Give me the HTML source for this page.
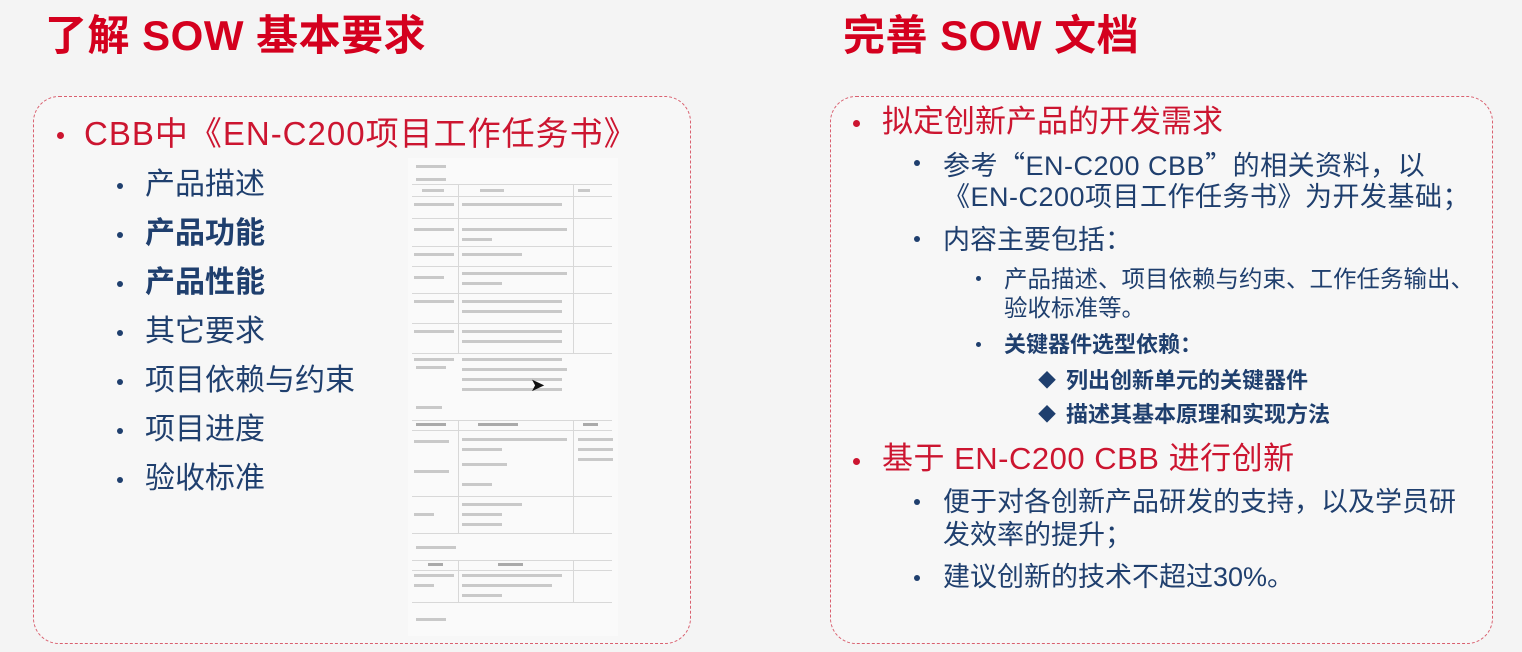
<!DOCTYPE html>
<html><head><meta charset="utf-8">
<style>
html,body{margin:0;padding:0}
body{width:1522px;height:652px;background:#f4f4f4;position:relative;overflow:hidden;font-family:"Liberation Sans","Noto Sans CJK SC",sans-serif}
.a{position:absolute;white-space:nowrap}
.t{font-size:42px;font-weight:bold;color:#d4001e;line-height:42px}
.box{position:absolute;border:1.5px dashed #d9606f;border-radius:26px;background:#f7f7f7}
.r{color:#cc1530}
.b{color:#1f3f6e}
.bold{font-weight:bold}
.q{font-family:"Noto Sans CJK SC",sans-serif}
.dot{position:absolute;border-radius:50%}
.doc{position:absolute;left:408px;top:158px;width:210px;height:478px;background:#fafafa}
.doc div{position:absolute;background:#d8d8d8}
.doc span{position:absolute;height:3px;background:#c9c9c9}
</style></head><body>
<div class="a t" style="left:45px;top:15px;letter-spacing:0.5px">了解 SOW 基本要求</div>
<div class="a t" style="left:843px;top:15px;letter-spacing:0.5px">完善 SOW 文档</div>

<div class="box" style="left:33px;top:96px;width:656px;height:546px"></div>
<div class="box" style="left:830px;top:96px;width:661px;height:546px"></div>

<!-- left -->
<div class="dot" style="left:57px;top:132px;width:7px;height:7px;background:#cc1530"></div>
<div class="a r" style="left:84px;top:116px;font-size:33px;line-height:36px;letter-spacing:1px">CBB中《EN-C200项目工作任务书》</div>

<div class="a b" style="left:145px;top:169px;font-size:30px;line-height:32px">产品描述</div>
<div class="a b bold" style="left:145px;top:218px;font-size:30px;line-height:32px">产品功能</div>
<div class="a b bold" style="left:145px;top:267px;font-size:30px;line-height:32px">产品性能</div>
<div class="a b" style="left:145px;top:316px;font-size:30px;line-height:32px">其它要求</div>
<div class="a b" style="left:145px;top:365px;font-size:30px;line-height:32px">项目依赖与约束</div>
<div class="a b" style="left:145px;top:414px;font-size:30px;line-height:32px">项目进度</div>
<div class="a b" style="left:145px;top:463px;font-size:30px;line-height:32px">验收标准</div>
<div class="dot" style="left:117px;top:183px;width:6px;height:6px;background:#1f3f6e"></div>
<div class="dot" style="left:117px;top:232px;width:6px;height:6px;background:#1f3f6e"></div>
<div class="dot" style="left:117px;top:281px;width:6px;height:6px;background:#1f3f6e"></div>
<div class="dot" style="left:117px;top:330px;width:6px;height:6px;background:#1f3f6e"></div>
<div class="dot" style="left:117px;top:379px;width:6px;height:6px;background:#1f3f6e"></div>
<div class="dot" style="left:117px;top:428px;width:6px;height:6px;background:#1f3f6e"></div>
<div class="dot" style="left:117px;top:477px;width:6px;height:6px;background:#1f3f6e"></div>

<div class="doc">
<span style="left:8px;top:7px;width:30px"></span>
<span style="left:8px;top:20px;width:30px"></span>
<div style="left:4px;top:26px;width:200px;height:1px"></div>
<span style="left:14px;top:31px;width:22px"></span><span style="left:72px;top:31px;width:24px"></span><span style="left:170px;top:31px;width:12px"></span>
<div style="left:4px;top:38px;width:200px;height:1px"></div>
<div style="left:4px;top:60px;width:200px;height:1px"></div>
<div style="left:4px;top:88px;width:200px;height:1px"></div>
<div style="left:4px;top:108px;width:200px;height:1px"></div>
<div style="left:4px;top:135px;width:200px;height:1px"></div>
<div style="left:4px;top:165px;width:200px;height:1px"></div>
<div style="left:4px;top:195px;width:200px;height:1px"></div>
<div style="left:50px;top:26px;width:1px;height:170px"></div>
<div style="left:165px;top:26px;width:1px;height:170px"></div>
<span style="left:6px;top:45px;width:40px"></span><span style="left:54px;top:45px;width:100px"></span>
<span style="left:6px;top:70px;width:40px"></span><span style="left:54px;top:70px;width:105px"></span><span style="left:54px;top:80px;width:30px"></span>
<span style="left:6px;top:95px;width:40px"></span><span style="left:54px;top:95px;width:60px"></span>
<span style="left:6px;top:118px;width:30px"></span><span style="left:54px;top:114px;width:105px"></span><span style="left:54px;top:124px;width:40px"></span>
<span style="left:6px;top:142px;width:40px"></span><span style="left:54px;top:142px;width:100px"></span><span style="left:54px;top:152px;width:100px"></span>
<span style="left:6px;top:172px;width:40px"></span><span style="left:54px;top:172px;width:100px"></span><span style="left:54px;top:182px;width:100px"></span>
<span style="left:6px;top:200px;width:40px"></span><span style="left:54px;top:200px;width:100px"></span><span style="left:54px;top:210px;width:105px"></span><span style="left:54px;top:220px;width:100px"></span>
<span style="left:8px;top:208px;width:30px"></span><span style="left:54px;top:230px;width:100px"></span>
<span style="left:8px;top:248px;width:26px"></span>
<div style="left:4px;top:262px;width:200px;height:1px"></div>
<span style="left:8px;top:265px;width:30px;background:#aaa"></span><span style="left:70px;top:265px;width:40px;background:#aaa"></span><span style="left:175px;top:265px;width:15px;background:#aaa"></span>
<div style="left:4px;top:272px;width:200px;height:1px"></div>
<div style="left:4px;top:338px;width:200px;height:1px"></div>
<div style="left:4px;top:375px;width:200px;height:1px"></div>
<div style="left:50px;top:262px;width:1px;height:114px"></div>
<div style="left:165px;top:262px;width:1px;height:114px"></div>
<span style="left:54px;top:280px;width:105px"></span><span style="left:54px;top:290px;width:40px"></span><span style="left:170px;top:280px;width:35px"></span><span style="left:170px;top:290px;width:35px"></span><span style="left:170px;top:300px;width:35px"></span>
<span style="left:6px;top:282px;width:35px"></span><span style="left:54px;top:305px;width:45px"></span><span style="left:6px;top:312px;width:35px"></span><span style="left:54px;top:325px;width:30px"></span>
<span style="left:54px;top:345px;width:60px"></span><span style="left:54px;top:355px;width:40px"></span><span style="left:6px;top:355px;width:20px"></span><span style="left:54px;top:365px;width:40px"></span>
<span style="left:8px;top:388px;width:40px"></span>
<div style="left:4px;top:402px;width:200px;height:1px"></div>
<span style="left:20px;top:405px;width:15px;background:#aaa"></span><span style="left:90px;top:405px;width:25px;background:#aaa"></span>
<div style="left:4px;top:412px;width:200px;height:1px"></div>
<span style="left:6px;top:416px;width:40px"></span><span style="left:54px;top:416px;width:100px"></span><span style="left:54px;top:426px;width:90px"></span><span style="left:54px;top:436px;width:40px"></span><span style="left:6px;top:426px;width:20px"></span>
<div style="left:4px;top:444px;width:200px;height:1px"></div>
<div style="left:50px;top:402px;width:1px;height:42px"></div>
<div style="left:165px;top:402px;width:1px;height:42px"></div>
<span style="left:8px;top:460px;width:30px"></span>
</div>
<div class="a" style="left:530px;top:376px;font-size:18px;line-height:18px;color:#111">➤</div>

<!-- right -->
<div class="dot" style="left:853px;top:120px;width:7px;height:7px;background:#cc1530"></div>
<div class="a r" style="left:882px;top:105px;font-size:31px;line-height:34px">拟定创新产品的开发需求</div>
<div class="dot" style="left:914px;top:160px;width:6px;height:6px;background:#1f3f6e"></div>
<div class="a b" style="left:943px;top:148px;font-size:27px;line-height:32px;letter-spacing:0.5px">参考<span class="q">“</span>EN-C200 CBB<span class="q">”</span>的相关资料，以</div>
<div class="a b" style="left:943px;top:181px;font-size:27px;line-height:32px;letter-spacing:0.5px">《EN-C200项目工作任务书》为开发基础；</div>
<div class="dot" style="left:914px;top:236px;width:6px;height:6px;background:#1f3f6e"></div>
<div class="a b" style="left:943px;top:224px;font-size:27px;line-height:32px">内容主要包括：</div>
<div class="dot" style="left:976px;top:276px;width:5px;height:5px;background:#1f3f6e"></div>
<div class="a b" style="left:1004px;top:265px;font-size:23.5px;line-height:28px">产品描述、项目依赖与约束、工作任务输出、</div>
<div class="a b" style="left:1004px;top:294px;font-size:23.5px;line-height:28px">验收标准等。</div>
<div class="dot" style="left:976px;top:342px;width:5px;height:5px;background:#1f3f6e"></div>
<div class="a b bold" style="left:1004px;top:331px;font-size:22px;line-height:28px">关键器件选型依赖：</div>
<div class="a b" style="left:1038px;top:369px;font-size:18px;line-height:24px">◆</div>
<div class="a b bold" style="left:1066px;top:367px;font-size:22px;line-height:28px">列出创新单元的关键器件</div>
<div class="a b" style="left:1038px;top:403px;font-size:18px;line-height:24px">◆</div>
<div class="a b bold" style="left:1066px;top:401px;font-size:22px;line-height:28px">描述其基本原理和实现方法</div>
<div class="dot" style="left:853px;top:458px;width:7px;height:7px;background:#cc1530"></div>
<div class="a r" style="left:882px;top:442px;font-size:31px;line-height:34px;letter-spacing:0.5px">基于 EN-C200 CBB 进行创新</div>
<div class="dot" style="left:914px;top:499px;width:6px;height:6px;background:#1f3f6e"></div>
<div class="a b" style="left:943px;top:486px;font-size:27px;line-height:32px">便于对各创新产品研发的支持，以及学员研</div>
<div class="a b" style="left:943px;top:519px;font-size:27px;line-height:32px">发效率的提升；</div>
<div class="dot" style="left:914px;top:575px;width:6px;height:6px;background:#1f3f6e"></div>
<div class="a b" style="left:943px;top:561px;font-size:27px;line-height:32px">建议创新的技术不超过30%。</div>
</body></html>
